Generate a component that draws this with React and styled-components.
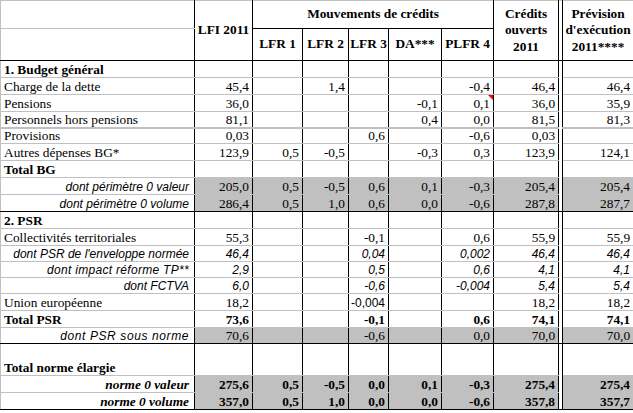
import React from 'react';
import styled, { createGlobalStyle } from 'styled-components';

const GlobalStyle = createGlobalStyle`
  html, body { margin: 0; padding: 0; background: #fff; }
  body { font-family: "Liberation Serif", "Times New Roman", serif; }
`;

const GRAY_LINE = '#c0c0c0';
const SHADE = '#c0c0c0';

const Sheet = styled.table`
  border-collapse: collapse;
  table-layout: fixed;
  width: 633px;
  font-family: "Liberation Serif", "Times New Roman", serif;
  font-size: 13.33px;
  color: #000;
`;

const Col = styled.col`
  width: ${(p) => p.$w}px;
`;

const HeadCell = styled.th`
  font-weight: bold;
  text-align: center;
  vertical-align: middle;
  line-height: 16.5px;
  padding: 0;
  white-space: nowrap;
  border-left: 1px solid ${(p) => (p.$leftGray ? GRAY_LINE : '#000')};
  border-right: 1px solid #000;
  border-top: 1px solid ${GRAY_LINE};
  border-bottom: 1px solid ${(p) => (p.$bottomGray ? GRAY_LINE : '#000')};
`;

const HeadRow = styled.tr`
  height: ${(p) => p.$h}px;
`;

const BodyRow = styled.tr`
  height: ${(p) => p.$h}px;
`;

const lineFor = (line) =>
  line === 'black'
    ? '1px solid #000'
    : line === 'thick'
    ? `2px solid ${GRAY_LINE}`
    : `1px solid ${GRAY_LINE}`;

const Cell = styled.td`
  position: relative;
  padding: 0 3px 0 0;
  text-align: right;
  vertical-align: bottom;
  line-height: 14px;
  white-space: nowrap;
  overflow: visible;
  font-weight: ${(p) => (p.$bold ? 'bold' : 'normal')};
  font-style: ${(p) => (p.$italic ? 'italic' : 'normal')};
  font-family: ${(p) =>
    p.$sans
      ? '"Liberation Sans", Arial, sans-serif'
      : '"Liberation Serif", "Times New Roman", serif'};
  font-size: ${(p) => (p.$sans ? '12px' : '13.33px')};
  letter-spacing: ${(p) => p.$spacing || 'normal'};
  background: ${(p) => (p.$shade ? SHADE : '#fff')};
  border-left: 1px solid #000;
  border-right: 1px solid #000;
  border-bottom: ${(p) => lineFor(p.$line)};
`;

const LabelCell = styled(Cell)`
  text-align: ${(p) => (p.$right ? 'right' : 'left')};
  padding: ${(p) => (p.$right ? '0 5px 0 0' : '0 0 0 3px')};
  border-left: 1px solid ${GRAY_LINE};
`;

const Gap = styled.td`
  padding: 0;
  background: #fff;
  border-left: 1px solid #000;
  border-right: 1px solid #000;
  border-bottom: ${(p) => (p.$line === 'black' ? '1px solid #000' : 'none')};
  border-top: none;
`;

const CommentMark = styled.span`
  position: absolute;
  top: 0;
  right: 0;
  width: 0;
  height: 0;
  border-top: 5px solid #ff0000;
  border-left: 5px solid transparent;
`;

const widths = [194, 58, 50, 46, 40, 53, 52, 65, 4, 71];

const rows = [
  { label: '1. Budget général', bold: true, h: 17 },
  { label: 'Charge de la dette', v: ['45,4', '', '1,4', '', '', '-0,4', '46,4', '46,4'], h: 17 },
  { label: 'Pensions', v: ['36,0', '', '', '', '-0,1', '0,1', '36,0', '35,9'], h: 17, mark: 5 },
  { label: 'Personnels hors pensions', v: ['81,1', '', '', '', '0,4', '0,0', '81,5', '81,3'], h: 16, line: 'thick' },
  { label: 'Provisions', v: ['0,03', '', '', '0,6', '', '-0,6', '0,03', ''], h: 16 },
  { label: 'Autres dépenses BG*', v: ['123,9', '0,5', '-0,5', '', '-0,3', '0,3', '123,9', '124,1'], h: 17 },
  { label: 'Total BG', bold: true, h: 17 },
  { label: 'dont périmètre 0 valeur', sub: true, shade: true, v: ['205,0', '0,5', '-0,5', '0,6', '0,1', '-0,3', '205,4', '205,4'], h: 17 },
  { label: 'dont périmètre 0 volume', sub: true, shade: true, v: ['286,4', '0,5', '1,0', '0,6', '0,0', '-0,6', '287,8', '287,7'], h: 17, line: 'black' },
  { label: '2. PSR', bold: true, h: 17 },
  { label: 'Collectivités territoriales', v: ['55,3', '', '', '-0,1', '', '0,6', '55,9', '55,9'], h: 17 },
  { label: "dont PSR de l'enveloppe normée", sub: true, italicNums: true, v: ['46,4', '', '', '0,04', '', '0,002', '46,4', '46,4'], h: 16 },
  { label: 'dont impact réforme TP**', sub: true, spacing: '0.3px', italicNums: true, v: ['2,9', '', '', '0,5', '', '0,6', '4,1', '4,1'], h: 16 },
  { label: 'dont FCTVA', sub: true, italicNums: true, v: ['6,0', '', '', '-0,6', '', '-0,004', '5,4', '5,4'], h: 16 },
  { label: 'Union européenne', v: ['18,2', '', '', '-0,004', '', '', '18,2', '18,2'], h: 17, sansIdx: [3] },
  { label: 'Total PSR', bold: true, boldNums: true, v: ['73,6', '', '', '-0,1', '', '0,6', '74,1', '74,1'], h: 17 },
  { label: 'dont PSR sous norme', sub: true, shade: true, spacing: '0.6px', v: ['70,6', '', '', '-0,6', '', '0,0', '70,0', '70,0'], h: 16, line: 'black' },
  { label: 'Total norme élargie', bold: true, h: 32 },
  { label: 'norme 0 valeur', total: true, shade: true, v: ['275,6', '0,5', '-0,5', '0,0', '0,1', '-0,3', '275,4', '275,4'], h: 17 },
  { label: 'norme 0 volume', total: true, shade: true, v: ['357,0', '0,5', '1,0', '0,0', '0,0', '-0,6', '357,8', '357,7'], h: 17, line: 'black' },
];

function DataRow({ r }) {
  const line = r.line || 'gray';
  const vals = r.v || ['', '', '', '', '', '', '', ''];
  const labelItalic = r.sub || r.total;
  const numProps = {
    $shade: r.shade,
    $bold: r.boldNums || r.total,
    $italic: r.italicNums,
    $line: line,
  };
  return (
    <BodyRow $h={r.h}>
      <LabelCell
        $right={labelItalic}
        $bold={r.bold || r.total}
        $italic={labelItalic}
        $sans={r.sub}
        $spacing={r.spacing}
        $line={line}
      >
        {r.label}
      </LabelCell>
      {vals.slice(0, 7).map((val, i) => (
        <Cell
          key={i}
          {...numProps}
          $sans={r.italicNums || (r.sansIdx && r.sansIdx.includes(i))}
        >
          {val}
          {r.mark === i && <CommentMark />}
        </Cell>
      ))}
      <Gap $line={line} />
      <Cell {...numProps} $sans={r.italicNums}>
        {vals[7]}
      </Cell>
    </BodyRow>
  );
}

export default function App() {
  return (
    <>
      <GlobalStyle />
      <Sheet>
        <colgroup>
          {widths.map((w, i) => (
            <Col key={i} $w={w} />
          ))}
        </colgroup>
        <thead>
          <HeadRow $h={28}>
            <HeadCell $bottomGray $leftGray />
            <HeadCell rowSpan={2}>LFI 2011</HeadCell>
            <HeadCell colSpan={5}>Mouvements de crédits</HeadCell>
            <HeadCell rowSpan={2}>
              Crédits
              <br />
              ouverts
              <br />
              2011
            </HeadCell>
            <HeadCell rowSpan={2} />
            <HeadCell rowSpan={2}>
              Prévision
              <br />
              d'exécution
              <br />
              2011****
            </HeadCell>
          </HeadRow>
          <HeadRow $h={32}>
            <HeadCell $leftGray />
            <HeadCell>LFR 1</HeadCell>
            <HeadCell>LFR 2</HeadCell>
            <HeadCell>LFR 3</HeadCell>
            <HeadCell>DA***</HeadCell>
            <HeadCell>PLFR 4</HeadCell>
          </HeadRow>
        </thead>
        <tbody>
          {rows.map((r, i) => (
            <DataRow key={i} r={r} />
          ))}
        </tbody>
      </Sheet>
    </>
  );
}
